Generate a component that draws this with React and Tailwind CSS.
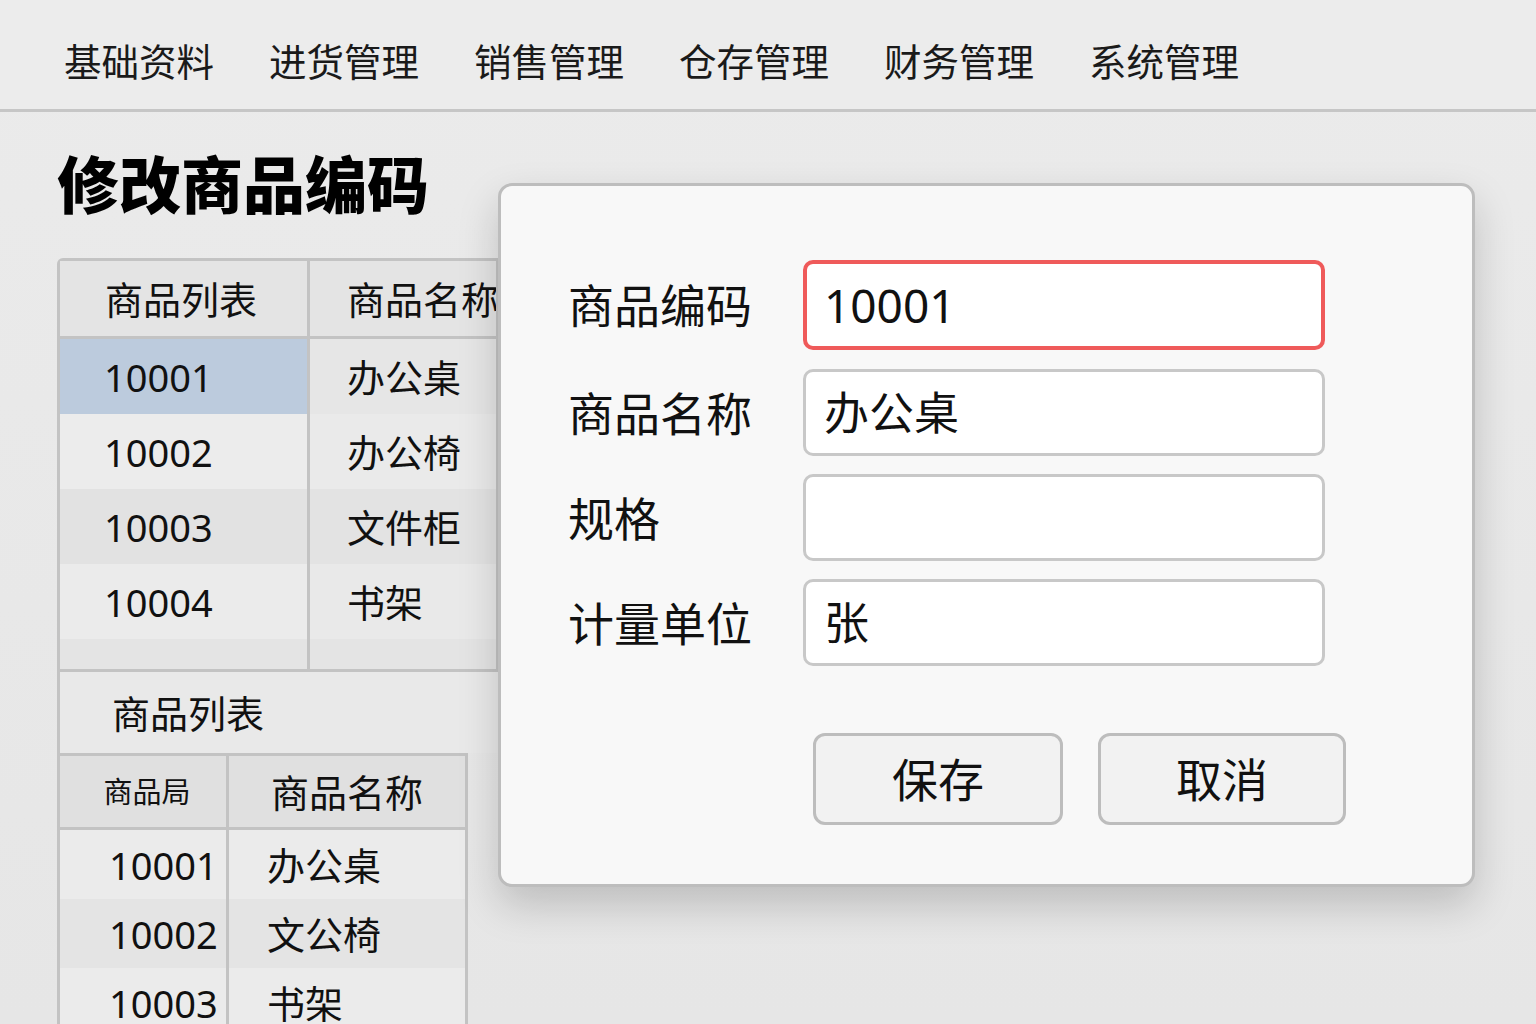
import React from "react";

const F = { fontFamily: '"Noto Sans", "Noto Sans CJK SC", sans-serif' };

const navItems = ["基础资料", "进货管理", "销售管理", "仓存管理", "财务管理", "系统管理"];

const rows1 = [
  { code: "10001", name: "办公桌", bg: "bg-[#bccbdd]", bg2: "bg-[#e6e6e6]" },
  { code: "10002", name: "办公椅", bg: "bg-[#ececec]", bg2: "bg-[#eaeaea]" },
  { code: "10003", name: "文件柜", bg: "bg-[#e2e2e2]", bg2: "bg-[#e3e3e3]" },
  { code: "10004", name: "书架", bg: "bg-[#ebebeb]", bg2: "bg-[#e9e9e9]" },
];

const rows2 = [
  { code: "10001", name: "办公桌", bg: "bg-[#ebebeb]" },
  { code: "10002", name: "文公椅", bg: "bg-[#e4e4e4]" },
  { code: "10003", name: "书架", bg: "bg-[#ebebeb]" },
];

function Field({ label, value, first }) {
  return (
    <div className="flex items-center">
      <div className="w-[235px] text-[46px] leading-none text-[#111]">{label}</div>
      <div
        className={
          first
            ? "w-[522px] h-[90px] bg-white border-[4px] border-[#ef5a5a] rounded-[10px] flex items-center pl-[17px] text-[46px] leading-none text-[#111]"
            : "w-[522px] h-[87px] bg-white border-[3px] border-[#c8c8c8] rounded-[10px] flex items-center pl-[18px] text-[45px] leading-none text-[#111]"
        }
      >
        {value}
      </div>
    </div>
  );
}

export default function App() {
  return (
    <div
      style={F}
      className="relative w-[1536px] h-[1024px] overflow-hidden bg-gradient-to-b from-[#ebebeb] to-[#e6e6e6] text-[#111]"
    >
      {/* Nav */}
      <div className="h-[112px] border-b-[3px] border-[#c6c6c6] bg-[#ececec] flex items-center pl-[64px] gap-[55px] pt-[14px]">
        {navItems.map((t) => (
          <div key={t} className="text-[37.5px] leading-none text-[#1a1a1a]">
            {t}
          </div>
        ))}
      </div>

      {/* Main */}
      <div className="pl-[57px]">
        <div className="mt-[42px] text-[62px] leading-none font-black text-black">修改商品编码</div>

        {/* Table 1 */}
        <div className="mt-[42px] w-[442px] border-l-[3px] border-t-[3px] border-r-[3px] border-[#c3c3c3] rounded-tl-[6px]">
          <div className="flex h-[78px] bg-[#e4e4e4] border-b-[3px] border-[#c3c3c3]">
            <div className="w-[250px] border-r-[3px] border-[#c3c3c3] flex items-center pl-[45px] text-[38px] leading-none">
              商品列表
            </div>
            <div className="flex-1 flex items-center pl-[37px] text-[38px] leading-none whitespace-nowrap overflow-hidden">
              商品名称
            </div>
          </div>
          {rows1.map((r) => (
            <div key={r.code} className="flex h-[75px]">
              <div className={`w-[250px] border-r-[3px] border-[#c3c3c3] flex items-center pl-[44px] text-[38px] leading-none ${r.bg}`}>
                {r.code}
              </div>
              <div className={`flex-1 flex items-center pl-[37px] text-[38px] leading-none ${r.bg2}`}>{r.name}</div>
            </div>
          ))}
          <div className="flex h-[30px]">
            <div className="w-[250px] border-r-[3px] border-[#c3c3c3] bg-[#e4e4e4]" />
            <div className="flex-1 bg-[#e4e4e4]" />
          </div>
        </div>

        {/* Section 2 */}
        <div className="w-[442px] border-l-[3px] border-t-[3px] border-[#c3c3c3]">
          <div className="h-[81px] flex items-center pl-[52px] text-[38px] leading-none bg-[#e9e9e9]">商品列表</div>
          <div className="w-[408px] border-t-[3px] border-r-[3px] border-[#c3c3c3]">
            <div className="flex h-[74px] bg-[#e0e0e0] border-b-[3px] border-[#c3c3c3]">
              <div className="w-[169px] border-r-[3px] border-[#c3c3c3] flex items-center justify-center pl-[8px] text-[29px] leading-none">
                商品局
              </div>
              <div className="flex-1 flex items-center justify-center text-[38px] leading-none">商品名称</div>
            </div>
            {rows2.map((r) => (
              <div key={r.code} className={`flex h-[69px] ${r.bg}`}>
                <div className="w-[169px] border-r-[3px] border-[#c3c3c3] flex items-center pl-[49px] text-[38px] leading-none">
                  {r.code}
                </div>
                <div className="flex-1 flex items-center pl-[38px] text-[38px] leading-none">{r.name}</div>
              </div>
            ))}
          </div>
        </div>
      </div>

      {/* Dialog */}
      <div className="absolute left-[498px] top-[183px] w-[977px] h-[704px] bg-[#f8f8f8] border-[3px] border-[#bdbdbd] rounded-[14px] shadow-[0_18px_40px_rgba(0,0,0,0.18)] pl-[67px] pt-[74px]">
        <div className="flex flex-col">
          <Field label="商品编码" value="10001" first />
          <div className="h-[19px]" />
          <Field label="商品名称" value="办公桌" />
          <div className="h-[18px]" />
          <Field label="规格" value="" />
          <div className="h-[18px]" />
          <Field label="计量单位" value="张" />
        </div>
        <div className="flex gap-[35px] ml-[245px] mt-[67px]">
          <button className="w-[250px] h-[92px] bg-[#f2f2f2] border-[3px] border-[#bdbdbd] rounded-[12px] text-[46px] leading-none text-[#111]">
            保存
          </button>
          <button className="w-[248px] h-[92px] bg-[#f2f2f2] border-[3px] border-[#bdbdbd] rounded-[12px] text-[46px] leading-none text-[#111]">
            取消
          </button>
        </div>
      </div>
    </div>
  );
}
